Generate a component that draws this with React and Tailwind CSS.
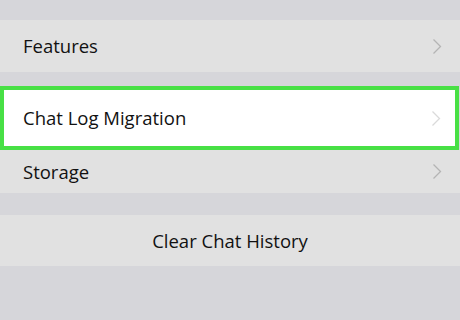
import React from "react";

const Chevron = ({ color }) => (
  <svg width="10" height="17" viewBox="0 0 10 17" fill="none">
    <path d="M1.5 1.5L8.5 8.5L1.5 15.5" stroke={color} strokeWidth="1.3" />
  </svg>
);

const Row = ({ label, height, highlighted }) => (
  <div
    className={`flex items-center justify-between ${height} ${
      highlighted
        ? "bg-white border-4 border-[#48e045] pl-[19px] pr-[14px] mr-px"
        : "bg-[#e1e1e1] pl-[23px] pr-[18px]"
    }`}
  >
    <span className="text-[18.5px] text-[#111]">{label}</span>
    <Chevron color={highlighted ? "#dadada" : "#b4b4b4"} />
  </div>
);

export default function App() {
  return (
    <div
      className="w-[460px] h-[320px] bg-[#d6d6da] flex flex-col overflow-hidden"
      style={{ fontFamily: '"Open Sans", "Liberation Sans", sans-serif' }}
    >
      <div className="h-[20px]" />
      <Row label="Features" height="h-[52px]" />
      <div className="h-[14px]" />
      <Row label="Chat Log Migration" height="h-[64px]" highlighted />
      <Row label="Storage" height="h-[43px]" />
      <div className="h-[22px]" />
      <div className="h-[51px] bg-[#e1e1e1] flex items-center justify-center">
        <span className="text-[18.5px] text-[#111]">Clear Chat History</span>
      </div>
    </div>
  );
}
